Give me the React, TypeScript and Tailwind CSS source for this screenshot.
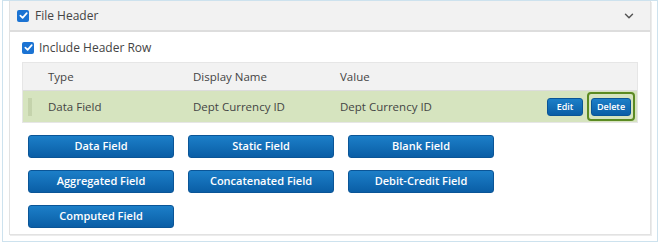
import React from 'react';
import { ChevronDown } from 'lucide-react';

const Check: React.FC<{ size?: number }> = ({ size = 12 }) => (
  <span
    className="inline-flex items-center justify-center rounded-[2px] bg-[#1b73d3]"
    style={{ width: size, height: size }}
  >
    <svg width={size - 3} height={size - 3} viewBox="0 0 10 10" fill="none">
      <path d="M1.5 5.2 L4 7.6 L8.6 2.4" stroke="white" strokeWidth="1.9" strokeLinecap="round" strokeLinejoin="round" />
    </svg>
  </span>
);

const BlueButton: React.FC<{ label: string; className?: string }> = ({ label, className = '' }) => (
  <button
    className={`rounded-[3px] border border-[#0a5597] bg-gradient-to-b from-[#1c7fc8] to-[#0a5ea6] text-white font-semibold ${className}`}
  >
    {label}
  </button>
);

const fields = [
  'Data Field',
  'Static Field',
  'Blank Field',
  'Aggregated Field',
  'Concatenated Field',
  'Debit-Credit Field',
  'Computed Field',
];

export default function App() {
  return (
    <div className="w-[659px] h-[243px] bg-white font-['Open_Sans',sans-serif] text-[#444]">
      <div className="ml-[2px] w-[656px] h-[242px] border border-[#cde2ee] pl-[6px] pr-[6px] pb-[6px]">
        {/* Panel */}
        <div className="h-full border border-[#e2e2e2] border-t-0 shadow-[1px_1px_0_#ececec]">
          {/* Header */}
          <div className="flex items-center h-[31px] bg-[#f2f2f2] border-b-2 border-[#dddddd] pl-[7px] pr-[14px]">
            <Check />
            <span className="ml-[6px] text-[12px] text-[#444]">File Header</span>
            <ChevronDown className="ml-auto text-[#555]" size={14} strokeWidth={2.5} />
          </div>

          {/* Body */}
          <div className="px-[12px]">
            <div className="flex items-center h-[29px] pt-[2px]">
              <Check />
              <span className="ml-[5px] text-[12px]">Include Header Row</span>
            </div>

            <div className="mt-[1px] border border-[#e6e6e6]">
              <div className="flex items-center h-[28px] bg-[#f2f2f2] border-b border-[#dcdcdc] text-[11.5px]">
                <span className="w-[170px] pl-[25px]">Type</span>
                <span className="w-[147px]">Display Name</span>
                <span>Value</span>
              </div>
              <div className="flex items-center h-[31px] bg-[#d6e4bf] text-[11.5px]">
                <span className="ml-[5px] w-[4px] h-[18px] bg-[radial-gradient(circle,#b3c299_45%,transparent_55%)] bg-[length:2px_2px]" />
                <span className="w-[161px] pl-[16px]">Data Field</span>
                <span className="w-[147px]">Dept Currency ID</span>
                <span>Dept Currency ID</span>
                <div className="ml-auto mr-[2px] flex items-center gap-[4px]">
                  <BlueButton label="Edit" className="w-[36px] h-[18px] text-[9px] leading-none" />
                  <div className="rounded-[4px] border-2 border-[#5b8a22] px-[2px] py-[3px]">
                    <BlueButton label="Delete" className="w-[40px] h-[18px] text-[9px] leading-none" />
                  </div>
                </div>
              </div>
            </div>

            <div className="mt-[12px] ml-[6px] grid grid-cols-[146px_146px_146px] gap-x-[14px] gap-y-[12px]">
              {fields.map((f) => (
                <BlueButton key={f} label={f} className="h-[23px] text-[11px]" />
              ))}
            </div>
          </div>
        </div>
      </div>
    </div>
  );
}
